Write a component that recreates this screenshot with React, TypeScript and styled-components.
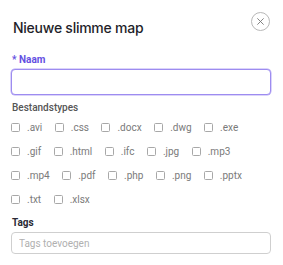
import React from "react";
import styled, { createGlobalStyle } from "styled-components";

const Global = createGlobalStyle`
  html, body { margin: 0; padding: 0; background: #fff; }
  body { font-family: Roboto, "Noto Sans", sans-serif; }
`;

const Dialog = styled.div`
  width: 283px;
  box-sizing: border-box;
  padding: 0 12px 0 11px;
`;

const Header = styled.div`
  display: flex;
  align-items: flex-start;
  justify-content: space-between;
  height: 53px;
`;

const Title = styled.h2`
  margin: 19px 0 0 2px;
  font-family: Inter, Roboto, sans-serif;
  font-size: 14px;
  line-height: 18px;
  font-weight: 500;
  color: #1f1f2a;
  letter-spacing: -0.25px;
`;

const CloseButton = styled.button`
  width: 19px;
  height: 19px;
  border-radius: 50%;
  border: 1px solid #b8b8b8;
  background: #fff;
  padding: 0;
  display: flex;
  align-items: center;
  justify-content: center;
  margin: 12px 1px 0 0;
  color: #777;
`;

const Field = styled.div`
  display: flex;
  flex-direction: column;
  gap: 2px;
`;

const Label = styled.label<{ $accent?: boolean }>`
  font-size: 10px;
  font-weight: 700;
  color: ${(p) => (p.$accent ? "#6450e2" : "#2a2a35")};
  line-height: 14px;
  padding-left: 1px;
`;

const SubLabel = styled.div`
  font-size: 10px;
  font-weight: 500;
  color: #555;
  line-height: 14px;
  padding-left: 1px;
`;

const Input = styled.input<{ $focus?: boolean }>`
  box-sizing: border-box;
  width: 100%;
  height: ${(p) => (p.$focus ? "26px" : "22px")};
  border: 1px solid ${(p) => (p.$focus ? "#9d8cf0" : "#cfcfcf")};
  box-shadow: ${(p) => (p.$focus ? "0 0 0 0.5px #b7a9f5" : "none")};
  border-radius: 4px;
  padding: 0 7px;
  font-family: Roboto, sans-serif;
  font-size: 10px;
  color: #333;
  outline: none;
  &::placeholder { color: #b0b0b0; }
`;

const Section = styled.div`
  margin-top: 6px;
`;

const Grid = styled.div`
  display: flex;
  flex-wrap: wrap;
  row-gap: 10px;
  column-gap: 12.5px;
  margin-top: 5px;
  width: 250px;
`;

const Option = styled.label`
  display: flex;
  align-items: center;
  gap: 7px;
  height: 14px;
  font-size: 10px;
  font-weight: 400;
  color: #7a7a7a;
`;

const Box = styled.span`
  width: 7px;
  height: 7px;
  border: 1px solid #a8a8a8;
  border-radius: 1.5px;
  background: #fff;
`;

const TagsField = styled(Field)`
  margin-top: 10px;
`;

const types = [
  ".avi", ".css", ".docx", ".dwg", ".exe",
  ".gif", ".html", ".ifc", ".jpg", ".mp3",
  ".mp4", ".pdf", ".php", ".png", ".pptx",
  ".txt", ".xlsx",
];

export default function App() {
  return (
    <>
      <Global />
      <Dialog>
        <Header>
          <Title>Nieuwe slimme map</Title>
          <CloseButton aria-label="Sluiten">
            <svg width="9" height="9" viewBox="0 0 10 10">
              <path d="M1.5 1.5 L8.5 8.5 M8.5 1.5 L1.5 8.5" stroke="#777" strokeWidth="1" fill="none" />
            </svg>
          </CloseButton>
        </Header>
        <Field>
          <Label $accent>* Naam</Label>
          <Input $focus />
        </Field>
        <Section>
          <SubLabel>Bestandstypes</SubLabel>
          <Grid>
            {types.map((t) => (
              <Option key={t}>
                <Box />
                {t}
              </Option>
            ))}
          </Grid>
        </Section>
        <TagsField>
          <Label>Tags</Label>
          <Input placeholder="Tags toevoegen" />
        </TagsField>
      </Dialog>
    </>
  );
}
